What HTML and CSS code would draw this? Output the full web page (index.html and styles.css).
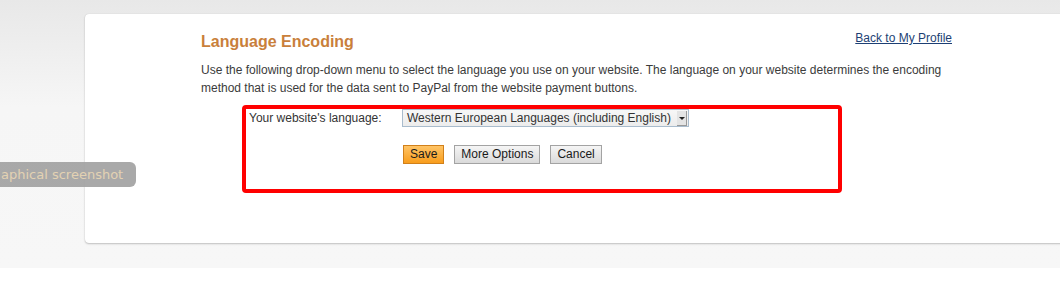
FILE: index.html
```html
<!DOCTYPE html>
<html lang="en">
<head>
  <meta charset="UTF-8" />
  <title>Language Encoding</title>
  <link rel="stylesheet" href="styles.css">
</head>
<body>
  <div class="page">
    <div class="card">
      <div class="content">
        <div class="head">
          <h1>Language Encoding</h1>
          <a href="#" class="back">Back to My Profile</a>
        </div>
        <p class="intro">Use the following drop-down menu to select the language you use on your website. The language on your website determines the encoding method that is used for the data sent to PayPal from the website payment buttons.</p>

        <div class="highlight">
          <div class="field">
            <label>Your website's language:</label>
            <div class="select">
              <span class="select-text">Western European Languages (including English)</span>
              <span class="select-arrow"></span>
            </div>
          </div>
          <div class="actions">
            <button class="btn primary">Save</button>
            <button class="btn">More Options</button>
            <button class="btn">Cancel</button>
          </div>
        </div>
      </div>
    </div>
    <div class="tip">aphical screenshot</div>
  </div>
</body>
</html>
```

FILE: styles.css
```css
html, body {
  margin: 0;
  background: #fff;
  overflow: hidden;
}
body {
  font-family: "Liberation Sans", Arial, sans-serif;
  color: #333;
}
.page {
  position: relative;
  height: 268px;
  padding-top: 14px;
  box-sizing: border-box;
  background: linear-gradient(#e8e8e8, #f6f6f6 40%, #f7f7f7);
}
.card {
  margin-left: 85px;
  width: 1000px;
  height: 229px;
  background: #fff;
  border-radius: 4px;
  box-shadow: 0 1px 2px rgba(0,0,0,0.22), 0 0 1px rgba(0,0,0,0.15);
  box-sizing: border-box;
  padding: 17px 0 0 116px;
}
.content {
  width: 751px;
}
.head {
  display: flex;
  justify-content: space-between;
  align-items: flex-start;
}
.head h1 {
  margin: 0;
  font-size: 16px;
  font-weight: bold;
  color: #c97f3b;
  line-height: 22px;
}
.back {
  font-size: 12px;
  color: #1d3f74;
  margin-top: 0;
  line-height: 14px;
}
.intro {
  margin: 8px 0 0;
  font-size: 12px;
  line-height: 18px;
  color: #3b3b3b;
}
.highlight {
  margin: 8px 0 0 41px;
  width: 600px;
  height: 88px;
  box-sizing: border-box;
  border: 4px solid #ff0000;
  border-radius: 4px;
  padding: 0 3px;
}
.field {
  display: flex;
  align-items: center;
  font-size: 12px;
}
.field label {
  width: 153px;
  color: #333;
}
.select {
  display: flex;
  align-items: center;
  width: 287px;
  height: 18px;
  box-sizing: border-box;
  border: 1px solid #a9bccd;
  background: linear-gradient(#f7f7f7, #ececec);
  padding-left: 4px;
  color: #333;
}
.select-text {
  flex: 1;
  font-size: 12px;
  white-space: nowrap;
}
.select-arrow {
  width: 10px;
  height: 15px;
  margin-right: 1px;
  background: #e4e4e4;
  position: relative;
  box-shadow: inset -1px -1px 0 #999;
}
.select-arrow::after {
  content: "";
  position: absolute;
  left: 2px;
  top: 6px;
  border-left: 3px solid transparent;
  border-right: 3px solid transparent;
  border-top: 3px solid #222;
}
.actions {
  display: flex;
  gap: 10px;
  margin: 18px 0 0 154px;
}
.btn {
  font-family: "Liberation Sans", Arial, sans-serif;
  font-size: 12px;
  height: 19px;
  padding: 0 6px;
  border: 1px solid #a3a3a3;
  border-radius: 0;
  background: linear-gradient(#f5f5f5, #dadada);
  color: #1a1a1a;
  line-height: 15px;
}
.btn.primary {
  background: linear-gradient(#ffc466, #f89d1c);
  border-color: #d1801a;
}
.tip {
  position: absolute;
  left: 0;
  top: 162px;
  width: 136px;
  height: 25px;
  background: rgba(160,160,160,0.9);
  border-radius: 0 6px 6px 0;
  font-family: "DejaVu Sans", sans-serif;
  font-size: 13px;
  line-height: 25px;
  color: #e3d2b3;
  padding-left: 1px;
  box-sizing: border-box;
  white-space: nowrap;
  overflow: hidden;
}
```
